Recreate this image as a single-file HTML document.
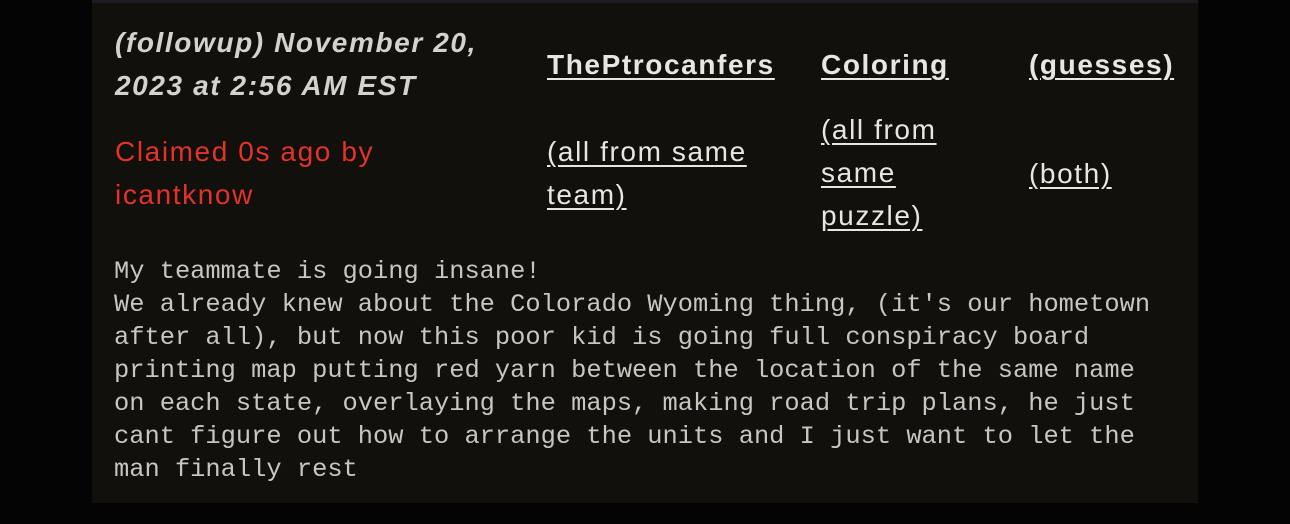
<!DOCTYPE html>
<html><head><meta charset="utf-8"><style>
html,body{margin:0;padding:0;background:#040404;width:1290px;height:524px;overflow:hidden}
.top{position:absolute;left:92px;top:0;width:1106px;height:3px;background:#1c1c22}
.panel{position:absolute;left:92px;top:3px;width:1106px;height:500px;background:#12100c}
.t{position:absolute;font-family:"Liberation Sans",sans-serif;font-size:28px;line-height:43px;white-space:nowrap;letter-spacing:1.6px}
.h{font-weight:bold;font-style:italic;color:#d4d2cc}
.l{color:#e8e6e0;text-decoration:underline;text-decoration-thickness:2px;text-underline-offset:4px}
.b{font-weight:bold}
.r{color:#e2332a}
.m{position:absolute;left:114px;top:255px;font-family:"Liberation Mono",monospace;font-size:25.4px;line-height:33px;color:#c9c6bf;white-space:pre}
</style></head><body>
<div class="top"></div><div class="panel"></div>
<div class="t h" style="left:115px;top:21px">(followup) November 20,<br>2023 at 2:56 AM EST</div>
<div class="t l b" style="left:547px;top:43px">ThePtrocanfers</div>
<div class="t l b" style="left:821px;top:43px">Coloring</div>
<div class="t l b" style="left:1029px;top:43px">(guesses)</div>
<div class="t r" style="left:115px;top:130px">Claimed 0s ago by<br>icantknow</div>
<div class="t l" style="left:547px;top:130px">(all from same<br>team)</div>
<div class="t l" style="left:821px;top:108px">(all from<br>same<br>puzzle)</div>
<div class="t l" style="left:1029px;top:152px">(both)</div>
<div class="m">My teammate is going insane!
We already knew about the Colorado Wyoming thing, (it's our hometown
after all), but now this poor kid is going full conspiracy board
printing map putting red yarn between the location of the same name
on each state, overlaying the maps, making road trip plans, he just
cant figure out how to arrange the units and I just want to let the
man finally rest</div>
</body></html>
